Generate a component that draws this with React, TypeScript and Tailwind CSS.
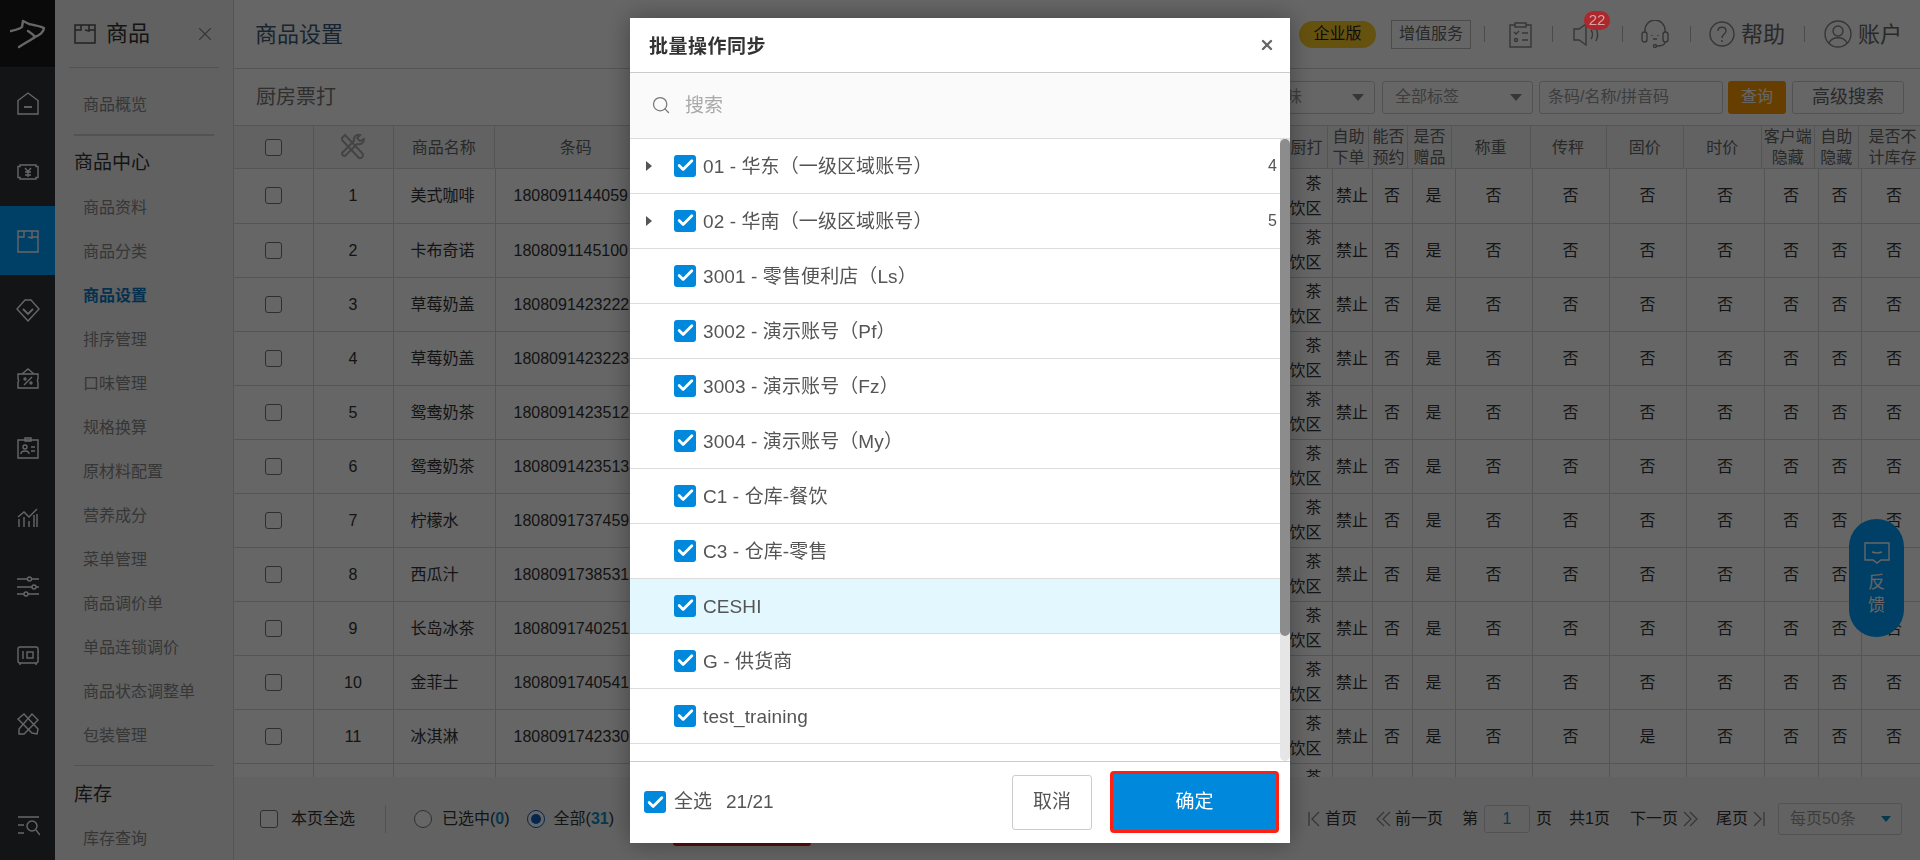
import { Check, Search, X } from "lucide-react";

const font = "font-['Liberation_Sans','Noto_Sans_CJK_SC',sans-serif]";

const menuItems = [
  "商品资料",
  "商品分类",
  "商品设置",
  "排序管理",
  "口味管理",
  "规格换算",
  "原材料配置",
  "营养成分",
  "菜单管理",
  "商品调价单",
  "单品连锁调价",
  "商品状态调整单",
  "包装管理",
];

const goods = [
  ["美式咖啡", "1808091144059"],
  ["卡布奇诺", "1808091145100"],
  ["草莓奶盖", "1808091423222"],
  ["草莓奶盖", "1808091423223"],
  ["鸳鸯奶茶", "1808091423512"],
  ["鸳鸯奶茶", "1808091423513"],
  ["柠檬水", "1808091737459"],
  ["西瓜汁", "1808091738531"],
  ["长岛冰茶", "1808091740251"],
  ["金菲士", "1808091740541"],
  ["冰淇淋", "1808091742330"],
  ["", ""],
];

const accounts = [
  { name: "01 - 华东（一级区域账号）", count: 4 },
  { name: "02 - 华南（一级区域账号）", count: 5 },
  { name: "3001 - 零售便利店（Ls）" },
  { name: "3002 - 演示账号（Pf）" },
  { name: "3003 - 演示账号（Fz）" },
  { name: "3004 - 演示账号（My）" },
  { name: "C1 - 仓库-餐饮" },
  { name: "C3 - 仓库-零售" },
  { name: "CESHI", active: true },
  { name: "G - 供货商" },
  { name: "test_training" },
];

const headCols = ["w-[79px]", "w-[80px]", "w-[101px]", "w-[163px]", "w-[620px]", "w-[50px]", "w-[41px]", "w-[39px]", "w-[43px]", "w-[79px]", "w-[76px]", "w-[77px]", "w-[78px]", "w-[53px]", "w-[44px]", "w-[68px]"];
const bodyCols = ["w-[79px]", "w-[80px]", "w-[102px]", "w-[163px]", "w-[627px]", "w-[47px]", "w-[40px]", "w-[40px]", "w-[43px]", "w-[77px]", "w-[77px]", "w-[77px]", "w-[78px]", "w-[54px]", "w-[43px]", "w-[66px]"];

function NavIcon({ children }: { children: React.ReactNode }) {
  return (
    <svg width="24" height="24" viewBox="0 0 24 24" fill="none" stroke="#fff" strokeWidth="1.4">
      {children}
    </svg>
  );
}

const navIcons = [
  <NavIcon key="home"><path d="M2 9.5 12 2l10 7.5V23H2Z" /><path d="M8 16h8" strokeWidth="1.8" /></NavIcon>,
  <NavIcon key="money"><path d="M4 5h16v1.5h2v11h-2V19H4v-1.5H2v-11h2Z" /><path d="m9 8 3 3.5L15 8M9 12h6M9 15h6M12 11.5V17" /></NavIcon>,
  <NavIcon key="box"><path d="M2 2h20v21H2Z" /><path d="M2 8h6V2M16 2v7l-4-1M16 8h6" /></NavIcon>,
  <NavIcon key="gem"><path d="M9 2h6l8 9-11 12L1 11Z" /><path d="m7 11 5 5 5-5" strokeWidth="1.8" /></NavIcon>,
  <NavIcon key="coupon"><path d="M2 7h20v5a2 2 0 0 0 0 3v6H2v-6a2 2 0 0 0 0-3Z" /><path d="M6 7l6-5 6 5M8 18l8-8" /><circle cx="9" cy="12" r="1" /><circle cx="15" cy="16" r="1" /></NavIcon>,
  <NavIcon key="card"><path d="M2 4h20v18H2Z" /><path d="M9 2h6v3H9Z" /><circle cx="9" cy="11" r="2" /><path d="M5 18c0-4 8-4 8 0M15 11h4M15 15h4" /></NavIcon>,
  <NavIcon key="chart"><path d="M3 22v-8M8 22V12M13 22v-6M18 22V10M21 22V9M2 12l6-5 5 5 8-8" /></NavIcon>,
  <NavIcon key="sliders"><path d="M1 5h10M16 5h7M1 13h15M20 13h3M1 20h7M12 20h11" /><circle cx="13.5" cy="5" r="2" /><circle cx="18" cy="13" r="2" /><circle cx="10" cy="20" r="2" /></NavIcon>,
  <NavIcon key="safe"><rect x="2" y="4" width="20" height="16" rx="2" /><path d="M7 8v8M4 20v2M20 20v2M22 9h1M22 15h1" /><rect x="11" y="9" width="6" height="6" /></NavIcon>,
  <NavIcon key="tools"><path d="m8 2 14 15-1 5-5-1L2 7Z" /><path d="m16 2 6 6-14 14H3v-5Z" /></NavIcon>,
];

function Ticked({ className = "" }: { className?: string }) {
  return (
    <span className={`flex h-[22px] w-[22px] shrink-0 items-center justify-center rounded-[3px] bg-[#0088dd] ${className}`}>
      <Check size={19} color="#fff" strokeWidth={3.5} />
    </span>
  );
}

function Divider() {
  return <span className="block h-[16px] w-px bg-[#bbb]" />;
}

function Sidebar() {
  return (
    <div className="flex h-full w-[55px] shrink-0 flex-col bg-[#2f3237]">
      <div className="flex h-[68px] shrink-0 items-center justify-center border-b border-[#3a3a3a] bg-[#1a1a1a]">
        <svg width="36" height="30" viewBox="9 21 36 30" fill="none" stroke="#fff" strokeWidth="2.4" strokeLinejoin="round" strokeLinecap="round">
          <path d="M10 33c4-1 9-2 11-4l1-6 6 3c5 1 11 2 15 4 0 4-5 8-10 9" />
          <path d="M27 33c3 2 6 4 7 6-4 3-10 6-16 10" />
        </svg>
      </div>
      {navIcons.map((icon, i) => (
        <div key={i} className={`flex h-[69px] shrink-0 items-center justify-center ${i === 2 ? "bg-[#009eff]" : ""}`}>
          {icon}
        </div>
      ))}
      <div className="mt-auto flex h-[69px] items-center justify-center">
        <NavIcon>
          <path d="M2 3h21M2 11h6M2 19h6" />
          <circle cx="16" cy="12" r="5" />
          <path d="m20 16 4 5" />
        </NavIcon>
      </div>
    </div>
  );
}

function MenuPanel() {
  return (
    <div className="h-full w-[179px] shrink-0 overflow-hidden border-r border-[#d4d4d4] bg-[#f3f3f3]">
      <div className="mx-[14px] flex h-[68px] items-center border-b border-[#ccc] pl-[5px]">
        <svg width="22" height="20" viewBox="0 0 22 20" fill="none" stroke="#555" strokeWidth="1.5">
          <path d="M1 1h20v18H1Z" />
          <path d="M1 6h6V1M15 1v6l-4-1M15 6h6" />
        </svg>
        <span className="ml-[10px] text-[22px] text-[#333]">商品</span>
        <X size={22} color="#888" strokeWidth={1.2} className="mr-[3px] ml-auto" />
      </div>
      <div className="mt-[15px] flex h-[44px] items-center pl-[28px] text-[16px] text-[#888]">商品概览</div>
      <div className="mx-[19px] mt-[7px] h-[2px] bg-[#ccc]" />
      <div className="mt-[5px] flex h-[44px] items-center pl-[19px] text-[19px] text-[#333]">商品中心</div>
      <div className="mt-px">
        {menuItems.map((item) => (
          <div key={item} className={`flex h-[44px] items-center pl-[28px] text-[16px] ${item === "商品设置" ? "font-bold text-[#0d7ac4]" : "text-[#888]"}`}>
            {item}
          </div>
        ))}
      </div>
      <div className="mx-[19px] mt-[7px] h-px bg-[#ccc]" />
      <div className="mt-[7px] flex h-[44px] items-center pl-[19px] text-[19px] text-[#333]">库存</div>
      <div className="flex h-[44px] items-center pl-[28px] text-[16px] text-[#888]">库存查询</div>
    </div>
  );
}

function TopBar() {
  return (
    <div className="flex h-[69px] shrink-0 items-center border-b border-[#d4d4d4] pr-[18px] pl-[21px]">
      <span className="text-[22px] text-[#3d5a75]">商品设置</span>
      <div className="ml-auto flex items-center">
        <span className="flex h-[27px] w-[77px] items-center justify-center rounded-full bg-[#ffcc26] text-[16px] text-[#222]">企业版</span>
        <span className="ml-[15px] flex h-[29px] w-[80px] items-center justify-center border border-[#bbb] text-[16px] text-[#666]">增值服务</span>
        <span className="ml-[13px]"><Divider /></span>
        <svg className="ml-[24px]" width="23" height="27" viewBox="0 0 23 27" fill="none" stroke="#888" strokeWidth="1.4">
          <path d="M6 4H1v22h21V4h-5" />
          <path d="M6 2h11v4H6Z" />
          <path d="m5 11 2 2 3-3M13 12h6M13 19h6" />
          <circle cx="7" cy="19" r="1.5" />
        </svg>
        <span className="ml-[20px]"><Divider /></span>
        <div className="relative ml-[20px] h-[28px] w-[28px]">
          <svg width="28" height="28" viewBox="0 0 28 28" fill="none" stroke="#888" strokeWidth="1.4">
            <path d="M1 9h5l7-5v21l-7-5H1Z" />
            <path d="M18 10c2 3 2 6 0 9M23 8c2 4 2 9 0 13" />
          </svg>
          <span className="absolute -top-[9px] left-[11px] z-20 flex h-[19px] w-[26px] items-center justify-center rounded-full bg-[#ad282c] text-[15px] text-[#d9a3a5]">22</span>
        </div>
        <span className="ml-[21px]"><Divider /></span>
        <svg className="ml-[18px]" width="28" height="28" viewBox="0 0 28 28" fill="none" stroke="#888" strokeWidth="1.4">
          <path d="M4 12V10a10 10 0 0 1 20 0v2" />
          <rect x="1" y="12" width="5" height="10" rx="2.5" />
          <rect x="22" y="12" width="5" height="10" rx="2.5" />
          <path d="M24 22c0 3-4 4-8 4" />
          <circle cx="14" cy="26" r="1.5" />
          <path d="M11 15v1M17 15v1M12 19h4" />
        </svg>
        <span className="ml-[21px]"><Divider /></span>
        <svg className="ml-[18px]" width="26" height="26" viewBox="0 0 26 26" fill="none" stroke="#888" strokeWidth="1.4">
          <circle cx="13" cy="13" r="12" />
          <path d="M9 10c0-5 8-5 8 0 0 3-4 3-4 7M13 19v2" />
        </svg>
        <span className="ml-[6px] text-[22px] text-[#666]">帮助</span>
        <span className="ml-[19px]"><Divider /></span>
        <svg className="ml-[19px]" width="28" height="28" viewBox="0 0 28 28" fill="none" stroke="#888" strokeWidth="1.4">
          <circle cx="14" cy="14" r="13" />
          <circle cx="14" cy="11" r="5" />
          <path d="M5 23c3-7 15-7 18 0" />
        </svg>
        <span className="ml-[6px] text-[22px] text-[#666]">账户</span>
      </div>
    </div>
  );
}

function FilterBar() {
  return (
    <div className="flex h-[56px] shrink-0 items-center pr-[16px] pl-[22px]">
      <span className="text-[20px] text-[#777]">厨房票打</span>
      <div className="ml-auto flex items-center text-[16px] text-[#999]">
        <div className="flex h-[33px] w-[150px] items-center justify-between rounded-[3px] border border-[#ccc] pr-[10px] pl-[12px]">
          全部口味
          <span className="h-0 w-0 border-x-[6px] border-t-[7px] border-x-transparent border-t-[#888]" />
        </div>
        <div className="ml-[7px] flex h-[33px] w-[151px] items-center justify-between rounded-[3px] border border-[#ccc] pr-[10px] pl-[12px]">
          全部标签
          <span className="h-0 w-0 border-x-[6px] border-t-[7px] border-x-transparent border-t-[#888]" />
        </div>
        <div className="ml-[6px] flex h-[33px] w-[184px] items-center rounded-[3px] border border-[#ccc] pl-[8px]">条码/名称/拼音码</div>
        <button className="ml-[5px] h-[33px] w-[58px] rounded-[3px] bg-[#ff9f00] text-[16px] text-white">查询</button>
        <button className="ml-[6px] h-[33px] w-[112px] rounded-[3px] border border-[#ccc] text-[18px] text-[#666]">高级搜索</button>
      </div>
    </div>
  );
}

function RowCheck() {
  return <span className="mx-auto block h-[17px] w-[17px] rounded-[3px] border border-[#777] bg-white" />;
}

function GoodsTable() {
  return (
    <div className="min-h-0 flex-1 overflow-hidden text-[16px] text-[#333]">
      <table className="w-[1693px] table-fixed border-collapse bg-[#f6f6f6] text-center leading-[21px] text-[#666]">
        <colgroup>{headCols.map((c, i) => <col key={i} className={c} />)}</colgroup>
        <thead>
          <tr className="h-[42px] [&>th]:border [&>th]:border-l-0 [&>th]:border-[#d4d4d4] [&>th]:p-0 [&>th]:font-normal">
            <th><RowCheck /></th>
            <th>
              <svg className="mx-auto" width="28" height="28" viewBox="0 0 28 28" fill="none" stroke="#aaa" strokeWidth="2">
                <path d="M3 5 6 2l17 18a3 3 0 0 1-3 5L3 7Z" />
                <path d="M25 6c0 4-3 6-7 5L6 23a3 3 0 0 1-3-3l12-12c-1-4 2-7 6-6l-3 3 3 3Z" />
              </svg>
            </th>
            <th>商品名称</th>
            <th>条码</th>
            <th />
            <th><div className="pr-[5px] text-right">厨打</div></th>
            <th>自助<br />下单</th>
            <th>能否<br />预约</th>
            <th>是否<br />赠品</th>
            <th>称重</th>
            <th>传秤</th>
            <th>固价</th>
            <th>时价</th>
            <th className="whitespace-nowrap">客户端<br />隐藏</th>
            <th>自助<br />隐藏</th>
            <th>是否不<br />计库存</th>
          </tr>
        </thead>
      </table>
      <table className="w-[1693px] table-fixed border-collapse bg-white text-center leading-[25px]">
        <colgroup>{bodyCols.map((c, i) => <col key={i} className={c} />)}</colgroup>
        <tbody>
          {goods.map(([name, code], i) => (
            <tr key={i} className="h-[54px] [&>td]:border-r [&>td]:border-b [&>td]:border-[#d4d4d4] [&>td]:p-0">
              <td>{name && <RowCheck />}</td>
              <td>{name && i + 1}</td>
              <td><div className="pl-[17px] text-left">{name}</div></td>
              <td><div className="pl-[18px] text-left">{code}</div></td>
              <td />
              <td><div className="pr-[10px] text-right">茶<br />饮区</div></td>
              <td>{name && "禁止"}</td>
              <td>{name && "否"}</td>
              <td>{name && "是"}</td>
              <td>{name && "否"}</td>
              <td>{name && "否"}</td>
              <td>{name && (i === 10 ? "是" : "否")}</td>
              <td>{name && "否"}</td>
              <td>{name && "否"}</td>
              <td>{name && "否"}</td>
              <td>{name && "否"}</td>
            </tr>
          ))}
        </tbody>
      </table>
    </div>
  );
}

function PagerBar() {
  return (
    <div className="flex h-[83px] shrink-0 items-center bg-[#f6f6f6] pr-[18px] pl-[26px] text-[16px] text-[#333]">
      <span className="h-[18px] w-[18px] rounded-[3px] border border-[#777] bg-white" />
      <span className="ml-[13px]">本页全选</span>
      <span className="ml-[30px] h-[28px] w-px bg-[#ccc]" />
      <span className="ml-[28px] h-[18px] w-[18px] rounded-full border border-[#777] bg-white" />
      <span className="ml-[10px]">已选中(<b className="text-[#0d8fc4]">0</b>)</span>
      <span className="ml-[17px] flex h-[18px] w-[18px] items-center justify-center rounded-full border border-[#0d5fc4] bg-white">
        <span className="h-[10px] w-[10px] rounded-full bg-[#0d5fc4]" />
      </span>
      <span className="ml-[9px]">全部(<b className="text-[#0d8fc4]">31</b>)</span>
      <button className="ml-[59px] h-[54px] w-[138px] rounded-[3px] bg-[#e02020]" />
      <div className="ml-auto flex items-center">
        <svg width="12" height="16" viewBox="0 0 12 16" fill="none" stroke="#888" strokeWidth="1.3"><path d="M1 1v14M11 1 4 8l7 7" /></svg>
        <span className="ml-[5px]">首页</span>
        <svg className="ml-[19px]" width="15" height="16" viewBox="0 0 15 16" fill="none" stroke="#888" strokeWidth="1.3"><path d="M8 1 1 8l7 7M14 1 7 8l7 7" /></svg>
        <span className="ml-[4px]">前一页</span>
        <span className="ml-[19px]">第</span>
        <span className="ml-[6px] flex h-[28px] w-[46px] items-center justify-center rounded-[3px] border border-[#ccc] text-[#0d8fc4]">1</span>
        <span className="ml-[6px]">页</span>
        <span className="ml-[17px]">共1页</span>
        <span className="ml-[20px]">下一页</span>
        <svg className="ml-[5px]" width="15" height="16" viewBox="0 0 15 16" fill="none" stroke="#888" strokeWidth="1.3"><path d="m1 1 7 7-7 7M7 1l7 7-7 7" /></svg>
        <span className="ml-[18px]">尾页</span>
        <svg className="ml-[5px]" width="12" height="16" viewBox="0 0 12 16" fill="none" stroke="#888" strokeWidth="1.3"><path d="M11 1v14M1 1l7 7-7 7" /></svg>
        <div className="ml-[13px] flex h-[32px] w-[124px] items-center justify-between rounded-[3px] border border-[#ccc] pr-[10px] pl-[11px] text-[#999]">
          每页50条
          <span className="h-0 w-0 border-x-[5px] border-t-[6px] border-x-transparent border-t-[#0d8fc4]" />
        </div>
      </div>
    </div>
  );
}

function SyncDialog() {
  return (
    <div className="fixed inset-0 z-10 flex items-center justify-center bg-black/60">
      <div className="flex h-[825px] w-[660px] flex-col bg-white shadow-[0_0_24px_rgba(0,0,0,0.35)]">
        <div className="flex h-[55px] shrink-0 items-center justify-between border-b border-[#ccc] pr-[15px] pl-[19px]">
          <span className="pt-[5px] text-[19px] font-bold tracking-[0.5px] text-[#333]">批量操作同步</span>
          <X size={16} color="#666" strokeWidth={3.5} />
        </div>
        <div className="flex h-[66px] shrink-0 items-center border-b border-[#ddd] bg-[#fafafa] pl-[21px]">
          <Search size={20} color="#777" strokeWidth={1.5} />
          <span className="ml-[14px] pt-[3px] text-[19px] text-[#aaa]">搜索</span>
        </div>
        <div className="flex min-h-0 flex-1">
          <div className="min-w-0 flex-1 overflow-hidden text-[19px] tracking-[0.1px] text-[#555]">
            {accounts.map((a) => (
              <div key={a.name} className={`flex h-[55px] shrink-0 items-center border-b border-[#ddd] pr-[3px] ${a.active ? "bg-[#e3f7ff]" : ""}`}>
                <span className="flex w-[44px] justify-end pr-[22px]">
                  {a.count && <span className="h-0 w-0 border-y-[5px] border-l-[6px] border-y-transparent border-l-[#555]" />}
                </span>
                <Ticked />
                <span className="ml-[7px] pt-[3px]">{a.name}</span>
                {a.count && <span className="ml-auto text-[16px]">{a.count}</span>}
              </div>
            ))}
          </div>
          <div className="w-[10px] shrink-0 rounded-b-full bg-[#e6e6e6]">
            <div className="h-[497px] rounded-full bg-[#8c8c8c]" />
          </div>
        </div>
        <div className="flex h-[82px] shrink-0 items-center border-t border-[#ccc] pl-[14px] text-[19px] text-[#555]">
          <Ticked />
          <span className="ml-[8px]">全选</span>
          <span className="ml-[14px]">21/21</span>
          <button className="ml-auto h-[55px] w-[80px] rounded-[3px] border border-[#ccc] text-[19px] text-[#555]">取消</button>
          <button className="mr-[11px] ml-[18px] h-[62px] w-[169px] rounded-[4px] border-[3px] border-[#ff2014] bg-[#0088dd] text-[19px] text-white">确定</button>
        </div>
      </div>
    </div>
  );
}

export default function App() {
  return (
    <div className={`relative flex h-screen w-screen overflow-hidden bg-white ${font}`}>
      <Sidebar />
      <MenuPanel />
      <div className="flex min-w-0 flex-1 flex-col">
        <TopBar />
        <FilterBar />
        <GoodsTable />
        <PagerBar />
      </div>

      {/* feedback tab */}
      <div className="absolute top-[519px] right-[16px] flex h-[118px] w-[55px] flex-col items-center rounded-full bg-[#009eff] pt-[23px] text-[17px] leading-[23px] text-white">
        <svg width="26" height="24" viewBox="0 0 26 24" fill="none" stroke="#fff" strokeWidth="1.4">
          <path d="M1 1h24v17h-8l-4 3-4-3H1Z" />
          <path d="M8 10c3 1 7 1 10 0" />
        </svg>
        <span className="mt-[5px]">反</span>
        <span>馈</span>
      </div>

      <SyncDialog />
    </div>
  );
}
